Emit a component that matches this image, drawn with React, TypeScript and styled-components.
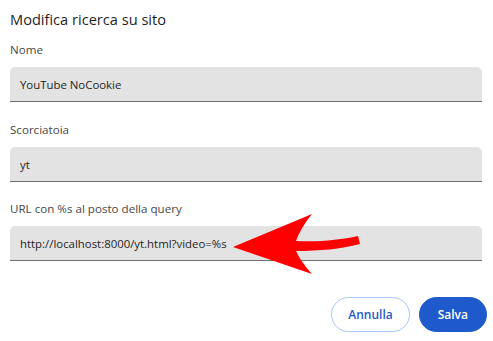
import * as React from "react";
import styled, { createGlobalStyle } from "styled-components";

const GlobalStyle = createGlobalStyle`
  html, body {
    margin: 0;
    padding: 0;
    background: #ffffff;
  }
  body {
    font-family: "Open Sans", "Noto Sans", "Liberation Sans", sans-serif;
    color: #1f1f1f;
  }
`;

const Dialog = styled.div`
  position: relative;
  width: 493px;
  height: 341px;
  box-sizing: border-box;
  padding: 8px 11px 0 10px;
  display: flex;
  flex-direction: column;
`;

const Title = styled.h1`
  margin: 0;
  font-size: 14.6px;
  font-weight: 400;
  line-height: 22px;
  color: #1f1f1f;
`;

const Field = styled.div<{ top: number }>`
  display: flex;
  flex-direction: column;
  margin-top: ${(p) => p.top}px;
`;

const Label = styled.label`
  font-size: 11.6px;
  line-height: 16px;
  color: #474747;
  margin-bottom: 9px;
`;

const Input = styled.div`
  height: 35px;
  box-sizing: border-box;
  background: #e3e3e3;
  border-radius: 5px 5px 0 0;
  border-bottom: 1px solid #6f6f6f;
  padding: 0 10px;
  display: flex;
  align-items: center;
  font-size: 11.4px;
  color: #1f1f1f;
`;

const Actions = styled.div`
  display: flex;
  justify-content: flex-end;
  gap: 9px;
  margin-top: 36px;
  margin-right: -5px;
`;

const Button = styled.button<{ primary?: boolean }>`
  height: 35px;
  padding: 0 ${(p) => (p.primary ? 18 : 16)}px;
  border-radius: 18px;
  font-family: "Open Sans", "Noto Sans", sans-serif;
  font-size: 12px;
  font-weight: 600;
  cursor: pointer;
  border: 1px solid ${(p) => (p.primary ? "#1f5acc" : "#a8c7fa")};
  background: ${(p) => (p.primary ? "#1f5acc" : "#ffffff")};
  color: ${(p) => (p.primary ? "#ffffff" : "#1f5acc")};
`;

const Arrow = styled.svg`
  position: absolute;
  left: 0;
  top: 0;
  pointer-events: none;
`;

export default function App() {
  return (
    <>
      <GlobalStyle />
      <Dialog>
        <Title>Modifica ricerca su sito</Title>
        <Field top={12}>
          <Label>Nome</Label>
          <Input>YouTube NoCookie</Input>
        </Field>
        <Field top={20}>
          <Label>Scorciatoia</Label>
          <Input>yt</Input>
        </Field>
        <Field top={19}>
          <Label>URL con %s al posto della query</Label>
          <Input>http://localhost:8000/yt.html?video=%s</Input>
        </Field>
        <Actions>
          <Button>Annulla</Button>
          <Button primary>Salva</Button>
        </Actions>
        <Arrow width="493" height="341" viewBox="0 0 493 341">
          <path
            d="M233 247 L312 214 Q300 229 296 241 C320 242 340 240 358 236 L360 244 C340 249 320 251 296 251 Q301 262 312 274 Z"
            fill="#ff0000"
          />
        </Arrow>
      </Dialog>
    </>
  );
}
